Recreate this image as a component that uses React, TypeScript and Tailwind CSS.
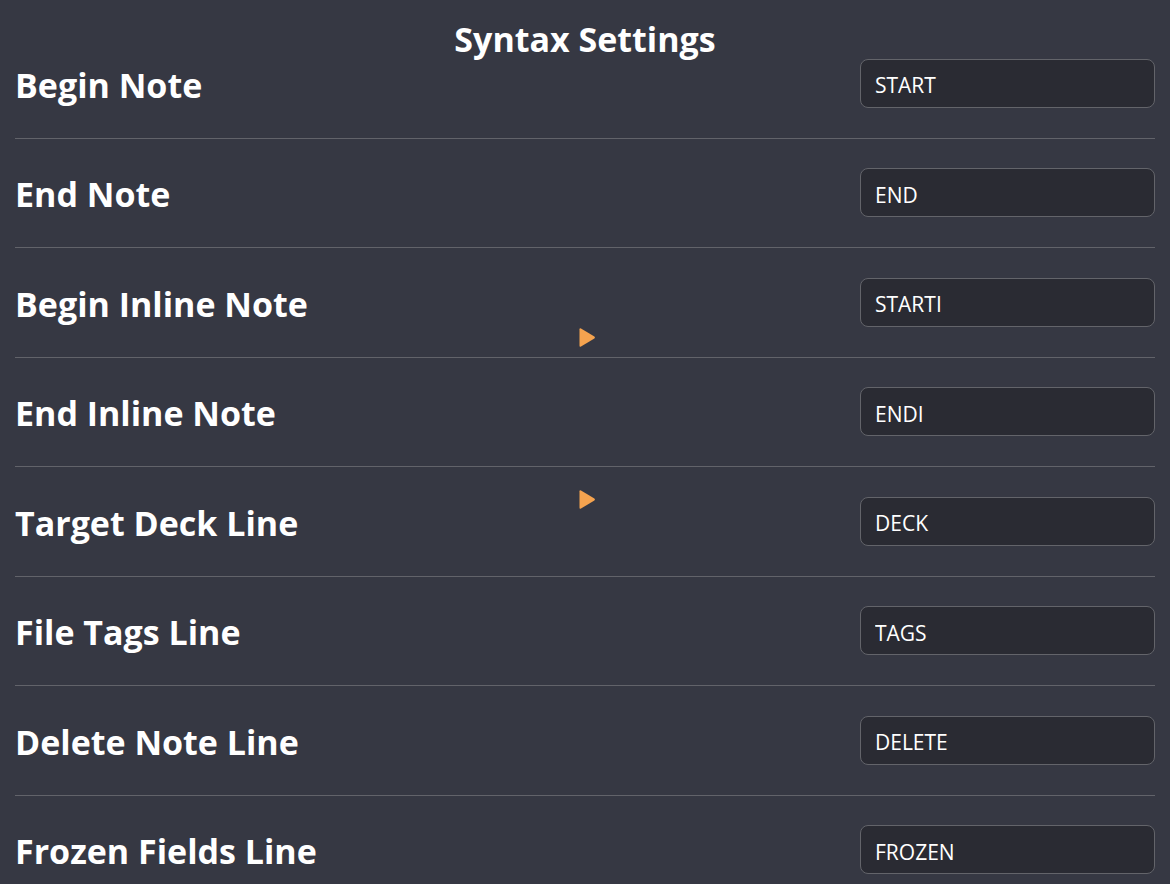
const rows = [
  { label: "Begin Note", value: "START" },
  { label: "End Note", value: "END" },
  { label: "Begin Inline Note", value: "STARTI" },
  { label: "End Inline Note", value: "ENDI" },
  { label: "Target Deck Line", value: "DECK" },
  { label: "File Tags Line", value: "TAGS" },
  { label: "Delete Note Line", value: "DELETE" },
  { label: "Frozen Fields Line", value: "FROZEN" },
];

function Arrow({ className }: { className: string }) {
  return (
    <svg className={className} width="18" height="21" viewBox="0 0 18 21">
      <path
        d="M1.5 2.2 Q1.5 0.6 3 1.4 L16.4 9.4 Q17.6 10.5 16.4 11.6 L3 19.6 Q1.5 20.4 1.5 18.8 Z"
        fill="#f5a34f"
      />
    </svg>
  );
}

export default function App() {
  return (
    <div
      className="relative min-h-[884px] w-full overflow-hidden bg-[#363843] px-[15px] pt-[19px] text-white"
      style={{ fontFamily: '"Open Sans", "Noto Sans", sans-serif' }}
    >
      <h1 className="relative z-10 -mb-[30px] text-center text-[34px] font-bold leading-[40px]">
        Syntax Settings
      </h1>
      <div>
        {rows.map((row) => (
          <div
            key={row.label}
            className="flex h-[109.5px] items-center justify-between border-b border-[#62636a]"
          >
            <span className="pt-[3px] text-[34px] font-bold leading-none">{row.label}</span>
            <input
              readOnly
              value={row.value}
              className="h-[49px] w-[295px] rounded-[8px] border border-[#63646a] bg-[#2a2b33] px-[14px] pt-[4px] text-[21px] text-white outline-none"
            />
          </div>
        ))}
      </div>
      <Arrow className="absolute left-[578px] top-[327px]" />
      <Arrow className="absolute left-[578px] top-[489px]" />
    </div>
  );
}
